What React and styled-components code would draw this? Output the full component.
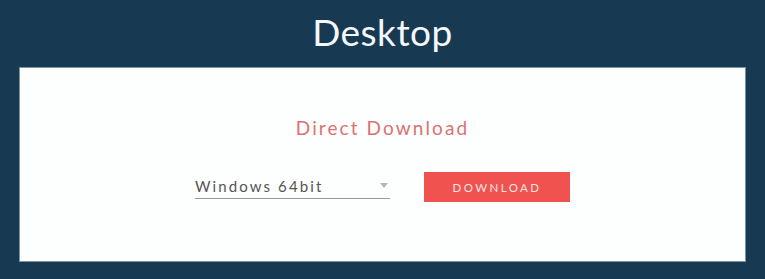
import React from "react";
import styled, { createGlobalStyle } from "styled-components";

const Global = createGlobalStyle`
  body {
    margin: 0;
    background: #173a52;
    font-family: Lato, "Open Sans", sans-serif;
  }
`;

const Page = styled.div`
  height: 279px;
  display: flex;
  flex-direction: column;
`;

const Heading = styled.h1`
  margin: 0;
  height: 68px;
  display: flex;
  align-items: center;
  justify-content: center;
  color: #f4f8fa;
  font-size: 37px;
  font-weight: 400;
  letter-spacing: 0.5px;
  padding-bottom: 6px;
  box-sizing: border-box;
`;

const Card = styled.div`
  margin: 0 20px;
  height: 193px;
  background: #fdfefe;
  box-shadow: 0 0 0 1px #7b93a3;
  display: flex;
  flex-direction: column;
  align-items: center;
`;

const SubTitle = styled.h2`
  margin: 48px 0 0;
  font-size: 19px;
  font-weight: 400;
  color: #d9736f;
  letter-spacing: 2.1px;
`;

const Row = styled.div`
  margin-top: 33px;
  display: flex;
  align-items: flex-end;
  gap: 34px;
`;

const Select = styled.div`
  width: 195px;
  height: 26px;
  margin-bottom: 3px;
  border-bottom: 1px solid #9a9a9a;
  display: flex;
  align-items: center;
  justify-content: space-between;
  font-size: 15px;
  color: #555;
  letter-spacing: 2.1px;
  box-sizing: border-box;
`;

const Caret = styled.span`
  width: 0;
  height: 0;
  margin-right: 2px;
  border-left: 4px solid transparent;
  border-right: 4px solid transparent;
  border-top: 5px solid #b5b5b5;
`;

const Button = styled.button`
  width: 146px;
  height: 30px;
  border: none;
  background: #f0524f;
  color: #fde3e2;
  font-family: Lato, sans-serif;
  font-size: 11.5px;
  letter-spacing: 2.4px;
  cursor: pointer;
`;

export default function App() {
  return (
    <Page>
      <Global />
      <Heading>Desktop</Heading>
      <Card>
        <SubTitle>Direct Download</SubTitle>
        <Row>
          <Select>
            <span>Windows 64bit</span>
            <Caret />
          </Select>
          <Button>DOWNLOAD</Button>
        </Row>
      </Card>
    </Page>
  );
}
